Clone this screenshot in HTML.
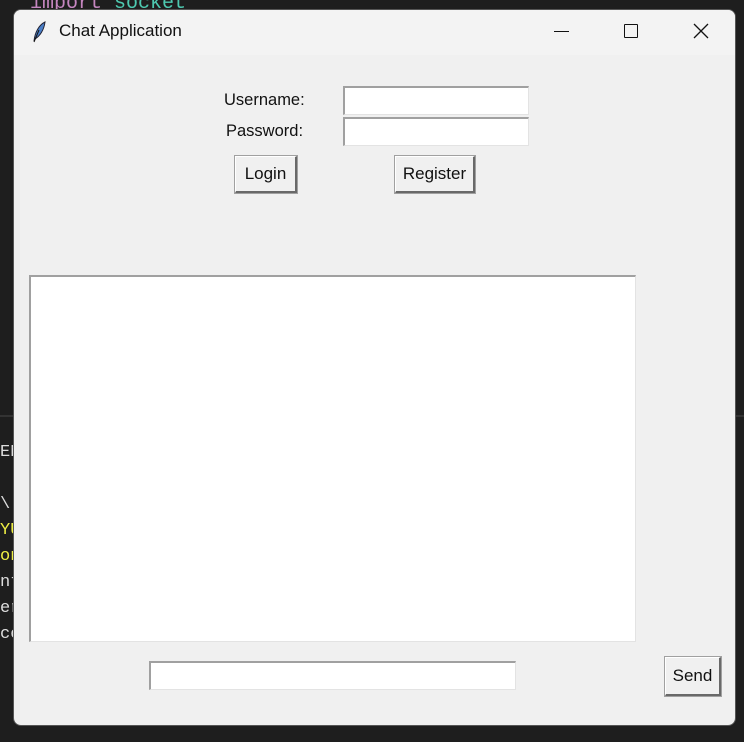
<!DOCTYPE html>
<html><head><style>
body{margin:0;width:744px;height:742px;background:#1e1e1e;position:relative;overflow:hidden;font-family:"Liberation Sans",sans-serif;}
.a{position:absolute}
.win{left:13px;top:9px;width:723px;height:717px;background:#f0f0f0;border-radius:8px;overflow:hidden;border:1px solid #555;box-sizing:border-box}
.tb{left:0;top:0;width:100%;height:45px;background:#f3f3f3}
.lbl{font-size:16px;color:#111}
.ent{background:#fff;border-top:2px solid #a0a0a0;border-left:2px solid #a0a0a0;border-right:1px solid #e3e3e3;border-bottom:1px solid #e3e3e3;box-sizing:border-box}
.btn{background:#f0f0f0;border-top:1px solid #fff;border-left:1px solid #fff;border-right:2px solid #696969;border-bottom:2px solid #696969;box-sizing:border-box;outline:1px solid #a0a0a0;font-size:17px;color:#111;text-align:center}
</style></head><body>
<div class="a" style="left:30px;top:-8px;color:#c586c0;font-family:'Liberation Mono';font-size:20px">import <span style="color:#4ec9b0">socket</span></div>
<div class="a" style="left:0;top:415px;width:744px;height:2px;background:#333"></div>
<div class="a" style="left:0;top:440px;font-family:'Liberation Mono';font-size:17px;line-height:26px;color:#ddd">EN<br><br>\<br><span style="color:#ee4">YU</span><br><span style="color:#ee4">on</span><br>nt<br>er<br>co</div>
<div class="a win">
 <div class="a tb"></div>
 <svg class="a" style="left:16px;top:10px" width="18" height="24" viewBox="0 0 18 24"><path d="M4 21 C5 12 9 5 15 2 C14 10 10 16 5 19 Z" fill="#4a7fc8" stroke="#223" stroke-width="1"/><path d="M4 22 L9 10" stroke="#111" stroke-width="1"/></svg>
 <div class="a" style="left:45px;top:11px;font-size:17px;color:#111">Chat Application</div>
 <div class="a" style="left:540px;top:21px;width:15px;height:1px;background:#111"></div>
 <div class="a" style="left:610px;top:14px;width:12px;height:12px;border:1.5px solid #111;border-radius:1px"></div>
 <svg class="a" style="left:679px;top:13px" width="16" height="16"><path d="M1 1L15 15M15 1L1 15" stroke="#111" stroke-width="1.3"/></svg>
 <div class="a lbl" style="left:210px;top:81px;font-size:16.5px">Username:</div>
 <div class="a lbl" style="left:212px;top:112px;font-size:16.5px">Password:</div>
 <div class="a ent" style="left:329px;top:76px;width:186px;height:29px"></div>
 <div class="a ent" style="left:329px;top:107px;width:186px;height:29px"></div>
 <div class="a btn" style="left:221px;top:146px;width:62px;height:37px;line-height:34px">Login</div>
 <div class="a btn" style="left:381px;top:146px;width:80px;height:37px;line-height:34px">Register</div>
 <div class="a ent" style="left:15px;top:265px;width:607px;height:367px"></div>
 <div class="a ent" style="left:135px;top:651px;width:367px;height:29px"></div>
 <div class="a btn" style="left:651px;top:647px;width:56px;height:39px;line-height:36px">Send</div>
</div>
</body></html>
